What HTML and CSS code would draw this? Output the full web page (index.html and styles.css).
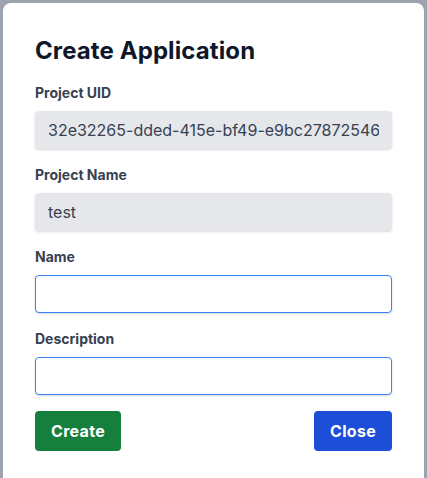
FILE: index.html
```html
<!DOCTYPE html>
<html>
<head>
<meta charset="utf-8">
<link rel="stylesheet" href="styles.css">
</head>
<body>
<div class="backdrop">
  <div class="modal">
    <h2 class="title">Create Application</h2>
    <div class="field">
      <label class="label">Project UID</label>
      <input class="input readonly" type="text" value="32e32265-dded-415e-bf49-e9bc278725461" readonly>
    </div>
    <div class="field">
      <label class="label">Project Name</label>
      <input class="input readonly" type="text" value="test" readonly>
    </div>
    <div class="field">
      <label class="label">Name</label>
      <input class="input active" type="text">
    </div>
    <div class="field">
      <label class="label">Description</label>
      <input class="input active" type="text">
    </div>
    <div class="actions">
      <button class="btn create">Create</button>
      <button class="btn close">Close</button>
    </div>
  </div>
</div>
</body>
</html>
```
FILE: styles.css
```css
* { box-sizing: border-box; }
html, body { margin: 0; padding: 0; height: 100%; }
body {
  font-family: Inter, "Noto Sans", sans-serif;
  background: #9ca3af;
  overflow: hidden;
}
.backdrop {
  padding: 3px 3px 0 3px;
  height: 100%;
}
.modal {
  background: #fff;
  border-radius: 8px;
  padding: 32px 32px 40px 32px;
  min-height: 500px;
}
.title {
  margin: 0 0 16px 0;
  font-size: 24px;
  line-height: 32px;
  font-weight: 700;
  letter-spacing: 0.1px;
  color: #0f172a;
}
.field { margin-bottom: 16px; }
.label {
  display: block;
  font-size: 14px;
  line-height: 20px;
  font-weight: 700;
  color: #374151;
  margin-bottom: 8px;
}
.input {
  display: block;
  width: 100%;
  height: 38px;
  padding: 8px 12px;
  font-family: Inter, "Noto Sans", sans-serif;
  font-size: 16px;
  line-height: 20px;
  color: #374151;
  border: 1px solid #e5e7eb;
  border-radius: 4px;
  box-shadow: 0 1px 3px rgba(0,0,0,0.1), 0 1px 2px rgba(0,0,0,0.06);
  outline: none;
  appearance: none;
}
.input.readonly { background: #e5e7eb; }
.input.active { background: #fff; border-color: #3b82f6; }
.actions {
  display: flex;
  justify-content: space-between;
}
.btn {
  font-family: Inter, "Noto Sans", sans-serif;
  font-size: 16px;
  line-height: 24px;
  font-weight: 700;
  letter-spacing: 0.3px;
  color: #fff;
  border: none;
  border-radius: 4px;
  padding: 8px 16px;
}
.create { background: #15803d; }
.close { background: #1d4ed8; }
```
